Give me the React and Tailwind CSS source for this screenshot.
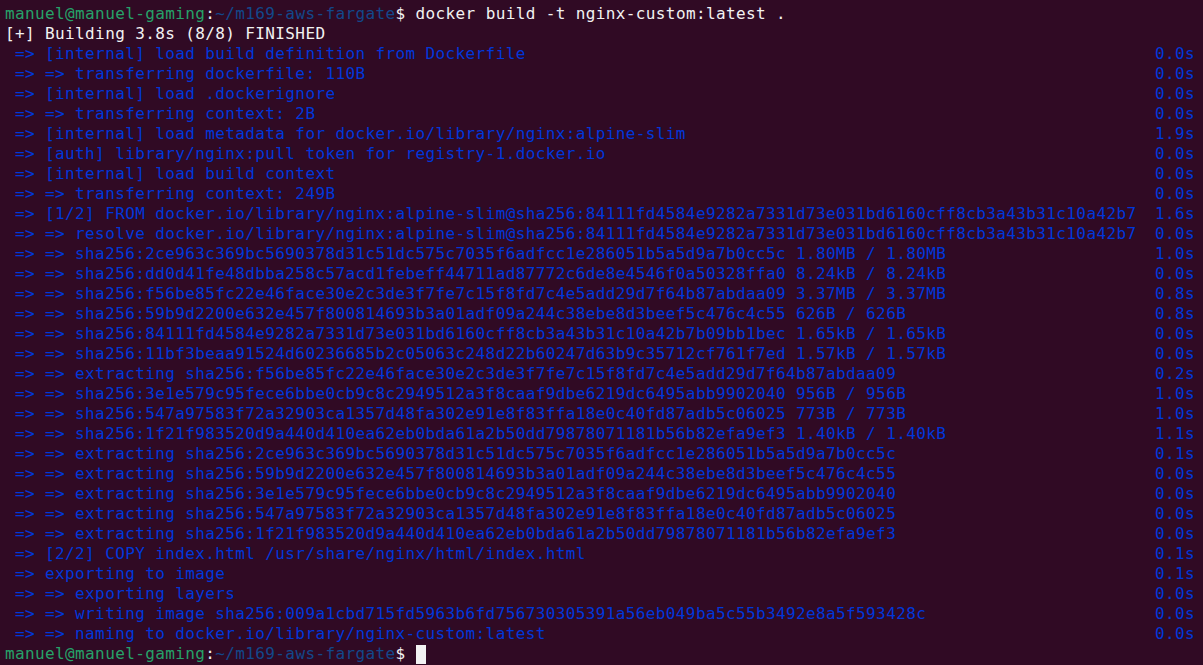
const lines = [
  [' => [internal] load build definition from Dockerfile', '0.0s'],
  [' => => transferring dockerfile: 110B', '0.0s'],
  [' => [internal] load .dockerignore', '0.0s'],
  [' => => transferring context: 2B', '0.0s'],
  [' => [internal] load metadata for docker.io/library/nginx:alpine-slim', '1.9s'],
  [' => [auth] library/nginx:pull token for registry-1.docker.io', '0.0s'],
  [' => [internal] load build context', '0.0s'],
  [' => => transferring context: 249B', '0.0s'],
  [' => [1/2] FROM docker.io/library/nginx:alpine-slim@sha256:84111fd4584e9282a7331d73e031bd6160cff8cb3a43b31c10a42b7', '1.6s'],
  [' => => resolve docker.io/library/nginx:alpine-slim@sha256:84111fd4584e9282a7331d73e031bd6160cff8cb3a43b31c10a42b7', '0.0s'],
  [' => => sha256:2ce963c369bc5690378d31c51dc575c7035f6adfcc1e286051b5a5d9a7b0cc5c 1.80MB / 1.80MB', '1.0s'],
  [' => => sha256:dd0d41fe48dbba258c57acd1febeff44711ad87772c6de8e4546f0a50328ffa0 8.24kB / 8.24kB', '0.0s'],
  [' => => sha256:f56be85fc22e46face30e2c3de3f7fe7c15f8fd7c4e5add29d7f64b87abdaa09 3.37MB / 3.37MB', '0.8s'],
  [' => => sha256:59b9d2200e632e457f800814693b3a01adf09a244c38ebe8d3beef5c476c4c55 626B / 626B', '0.8s'],
  [' => => sha256:84111fd4584e9282a7331d73e031bd6160cff8cb3a43b31c10a42b7b09bb1bec 1.65kB / 1.65kB', '0.0s'],
  [' => => sha256:11bf3beaa91524d60236685b2c05063c248d22b60247d63b9c35712cf761f7ed 1.57kB / 1.57kB', '0.0s'],
  [' => => extracting sha256:f56be85fc22e46face30e2c3de3f7fe7c15f8fd7c4e5add29d7f64b87abdaa09', '0.2s'],
  [' => => sha256:3e1e579c95fece6bbe0cb9c8c2949512a3f8caaf9dbe6219dc6495abb9902040 956B / 956B', '1.0s'],
  [' => => sha256:547a97583f72a32903ca1357d48fa302e91e8f83ffa18e0c40fd87adb5c06025 773B / 773B', '1.0s'],
  [' => => sha256:1f21f983520d9a440d410ea62eb0bda61a2b50dd79878071181b56b82efa9ef3 1.40kB / 1.40kB', '1.1s'],
  [' => => extracting sha256:2ce963c369bc5690378d31c51dc575c7035f6adfcc1e286051b5a5d9a7b0cc5c', '0.1s'],
  [' => => extracting sha256:59b9d2200e632e457f800814693b3a01adf09a244c38ebe8d3beef5c476c4c55', '0.0s'],
  [' => => extracting sha256:3e1e579c95fece6bbe0cb9c8c2949512a3f8caaf9dbe6219dc6495abb9902040', '0.0s'],
  [' => => extracting sha256:547a97583f72a32903ca1357d48fa302e91e8f83ffa18e0c40fd87adb5c06025', '0.0s'],
  [' => => extracting sha256:1f21f983520d9a440d410ea62eb0bda61a2b50dd79878071181b56b82efa9ef3', '0.0s'],
  [' => [2/2] COPY index.html /usr/share/nginx/html/index.html', '0.1s'],
  [' => exporting to image', '0.1s'],
  [' => => exporting layers', '0.0s'],
  [' => => writing image sha256:009a1cbd715fd5963b6fd756730305391a56eb049ba5c55b3492e8a5f593428c', '0.0s'],
  [' => => naming to docker.io/library/nginx-custom:latest', '0.0s'],
];

function Prompt({ children }) {
  return (
    <div className="h-5 whitespace-pre flex items-center">
      <span className="text-[#26a269]">manuel@manuel-gaming</span>
      <span className="text-[#f2f2f2]">:</span>
      <span className="text-[#12488b]">~/m169-aws-fargate</span>
      <span className="text-[#f2f2f2]">$ </span>
      {children}
    </div>
  );
}

export default function App() {
  return (
    <div
      className="w-[1203px] h-[665px] overflow-hidden bg-[#300a24] pl-[5px] pr-[8px] pt-[4px] text-[16px] tracking-[0.38px] leading-5"
      style={{ fontFamily: '"DejaVu Sans Mono", "Liberation Mono", monospace' }}
    >
      <Prompt>
        <span className="text-[#f2f2f2]">docker build -t nginx-custom:latest .</span>
      </Prompt>
      <div className="h-5 whitespace-pre text-[#f2f2f2]">[+] Building 3.8s (8/8) FINISHED</div>
      {lines.map(([text, time], i) => (
        <div key={i} className="h-5 whitespace-pre flex justify-between text-[#0037da]">
          <span>{text}</span>
          <span>{time}</span>
        </div>
      ))}
      <Prompt>
        <span className="inline-block w-[10px] h-[19px] bg-[#f2f2f2]" />
      </Prompt>
    </div>
  );
}
